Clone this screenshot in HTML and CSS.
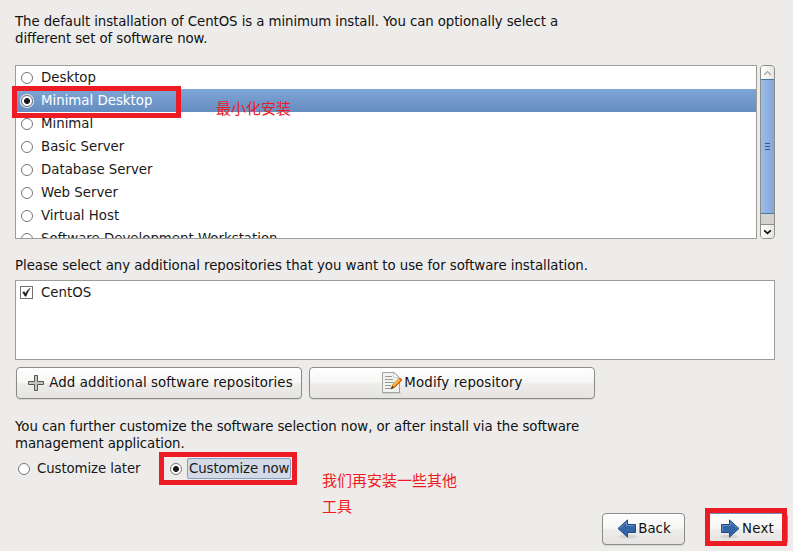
FILE: index.html
```html
<!DOCTYPE html>
<html lang="en">
<head>
<meta charset="utf-8">
<title>Software selection</title>
<link rel="stylesheet" href="styles.css">
</head>
<body>
<main class="page">
  <p class="intro">The default installation of CentOS is a minimum install. You can optionally select a<br>different set of software now.</p>

  <div class="chooser">
    <div class="list">
      <div class="row"><span class="radio"></span>Desktop</div>
      <div class="row selected"><span class="radio on"></span>Minimal Desktop</div>
      <div class="row"><span class="radio"></span>Minimal</div>
      <div class="row"><span class="radio"></span>Basic Server</div>
      <div class="row"><span class="radio"></span>Database Server</div>
      <div class="row"><span class="radio"></span>Web Server</div>
      <div class="row"><span class="radio"></span>Virtual Host</div>
      <div class="row"><span class="radio"></span>Software Development Workstation</div>
    </div>
    <div class="scrollbar">
      <div class="step up"><svg width="9" height="6" viewBox="0 0 9 6"><path d="M1.200 4.700 4.500 1.600 7.800 4.700" fill="none" stroke="#aaa" stroke-width="1.400"/></svg></div>
      <div class="thumb"><i></i><i></i><i></i></div>
      <div class="step down"><svg width="9" height="6" viewBox="0 0 9 6"><path d="M1.200 1.300 4.500 4.400 7.800 1.300" fill="none" stroke="#111" stroke-width="1.700"/></svg></div>
    </div>
  </div>

  <p class="repo-label">Please select any additional repositories that you want to use for software installation.</p>
  <div class="repos">
    <div class="row"><span class="check"><svg width="11" height="11" viewBox="0 0 11 11"><path d="M1.600 5.300 3.300 4.600 4.500 6.700C5.700 4 7 2.400 9.300 1.200 7.500 3.600 6.300 6 5.200 9.200H4Z" fill="#1c1c1c" stroke="#1c1c1c" stroke-width=".4"/></svg></span>CentOS</div>
  </div>
  <div class="repo-buttons">
    <button class="btn add"><svg width="16" height="16" viewBox="0 0 16 16"><path d="M6.500.5h3v6h6v3h-6v6h-3v-6h-6v-3h6z" fill="#c4c5c2" stroke="#555753"/></svg>Add additional software repositories</button>
    <button class="btn modify"><svg width="22" height="22" viewBox="0 0 22 22">
      <path d="M1 21.200h19" stroke="#000" stroke-opacity=".15"/>
      <path d="M1.500.5h11.700l5.300 5v15h-17z" fill="#f2f2f0" stroke="#a2a4a0"/>
      <path d="M12.500 1c1 2-.2 3.700.4 4.700 1.800-.3 3.800 0 5.200.8L13.500 1z" fill="#fff" stroke="#b5b7b3" stroke-width=".7"/>
      <path d="M4 4.500h7M4 7.500h8M4 10.500h9M4 13.500h6M4 16.500h6" stroke="#999b97"/>
      <path d="M10 16.800 11.800 12.800 18.200 6.500Q19.400 5.800 20.300 7.100 20.900 8.100 20.200 8.900L13.800 15.200Z" fill="#f57900" stroke="#a94700" stroke-width=".8"/>
      <path d="m12.400 13.600 6.300-6.200" stroke="#fcc84a" stroke-width="1.500"/>
      <path d="m10 16.900 1.200-2.500 1.400 1.300z" fill="#222"/>
    </svg>Modify repository</button>
  </div>

  <p class="custom-label">You can further customize the software selection now, or after install via the software<br>management application.</p>
  <div class="options">
    <div class="option"><span class="radio"></span><span class="option-text">Customize later</span></div>
    <div class="option"><span class="radio on"></span><span class="option-text focus">Customize now</span></div>
  </div>

  <div class="nav">
    <button class="btn back"><svg width="20" height="20" viewBox="0 0 20 20"><ellipse cx="11" cy="17.500" rx="9" ry="2" fill="#000" opacity=".09"/><path d="M1 9.500 10.500.9v4.600h8v8h-8v4.600z" fill="#3465a4" stroke="#204a87"/><path d="M2.600 9.400 9.500 3.200v3.300h8" fill="none" stroke="#6f98c9" stroke-width=".8"/></svg>Back</button>
    <button class="btn next"><svg width="20" height="20" viewBox="0 0 20 20"><ellipse cx="9" cy="17.500" rx="9" ry="2" fill="#000" opacity=".09"/><path d="M19 9.500 9.500.9v4.600h-8v8h8v4.600z" fill="#3465a4" stroke="#204a87"/><path d="M17.400 9.400 10.500 3.200v3.300h-8v6" fill="none" stroke="#6f98c9" stroke-width=".8"/></svg>Next</button>
  </div>

  <div class="mark mark-desktop"></div>
  <div class="mark mark-custom"></div>
  <div class="mark mark-next"></div>
  <div class="note note-minimal">最小化安装</div>
  <div class="note note-tools">我们再安装一些其他<br>工具</div>
</main>
</body>
</html>
```
FILE: styles.css
```css
* { box-sizing: border-box; }
body { margin: 0; background: #edeceb; }
.page {
  position: relative;
  width: 793px;
  height: 551px;
  padding: 13px 18px 0 15px;
  overflow: hidden;
  font: 13.33px/17px "DejaVu Sans", sans-serif;
  color: #1a1a1a;
  white-space: nowrap;
}
p { margin: 0; color: #111; }
.intro { letter-spacing: -0.08px; }
.chooser { display: flex; gap: 3px; height: 174px; margin-top: 18px; }
.list, .repos { border: 1px solid #9c9c98; background: #fff; overflow: hidden; }
.list { width: 742px; }
.row { display: flex; align-items: center; height: 23px; padding-left: 5px; gap: 8px; }
.selected { background: linear-gradient(#7fa5d6, #668dc0); color: #fff; }
.radio {
  flex: none;
  width: 12px;
  height: 12px;
  border: 1px solid #767676;
  border-radius: 50%;
  background: #fff;
}
.selected .radio { box-shadow: 0 0 0 1px #e8eef5; }
.radio.on { background: radial-gradient(circle at center, #1a1a1a 0 2.600px, #fff 3.300px); }
.scrollbar {
  display: flex;
  flex-direction: column;
  width: 15px;
  border: 1px solid #8d8d89;
  border-radius: 4px;
  background: #d3d2d0;
  overflow: hidden;
}
.step { display: flex; align-items: center; justify-content: center; height: 13px; background: linear-gradient(90deg, #fff, #e6e5e3); }
.down { height: 14px; margin-top: auto; border-top: 1px solid #8d8d89; }
.thumb {
  display: flex;
  flex-direction: column;
  align-items: center;
  justify-content: center;
  gap: 2px;
  height: 135px;
  margin: 0 -1px;
  border: 1px solid #4c76aa;
  background: linear-gradient(90deg, #9bbce5, #83a8d8);
}
.thumb i { width: 5px; height: 1px; background: #34598c; }
.repo-label { margin-top: 18px; letter-spacing: -0.05px; }
.repos { height: 80px; margin-top: 6px; }
.repos .row { padding-left: 4px; }
.check { width: 13px; height: 13px; border: 1px solid #6f6f6f; background: #fff; }
.check svg { display: block; }
.repo-buttons { display: flex; gap: 7px; margin: 7px 0 0 1px; }
.btn {
  display: flex;
  align-items: center;
  justify-content: center;
  height: 32px;
  padding: 0 0 2px;
  border: 1px solid #8b8b88;
  border-radius: 4px;
  background: linear-gradient(#fff, #f6f6f5 48%, #eeedec 52%, #e5e4e2);
  box-shadow: 0 1px 1px #d5d4d2;
  color: #111;
  font: inherit;
}
.btn svg { flex: none; position: relative; top: 1px; }
.add { width: 286px; gap: 5px; padding-left: 3px; letter-spacing: 0.085px; }
.modify { width: 286px; gap: 1px; letter-spacing: 0.15px; }
.custom-label { margin-top: 19px; letter-spacing: -0.075px; }
.options { display: flex; margin-top: 5px; height: 23px; padding-left: 3px; letter-spacing: -0.1px; }
.option { display: flex; align-items: center; gap: 5px; width: 152px; }
.option-text { height: 21px; padding: 1px 1px; border: 1px solid transparent; border-radius: 2px; }
.focus { border-color: #829fc5; background: #d3dae6; }
.nav { display: flex; gap: 20px; margin: 33px 0 0 587px; }
.back, .next { width: 83px; gap: 1px; flex: none; }
.back { padding-left: 1px; }
.next { gap: 2px; padding-left: 1px; border-color: #7191bb; letter-spacing: 0.2px; }
.mark { position: absolute; border: 5px solid #ed1c24; }
.mark-desktop { left: 12px; top: 86px; width: 169px; height: 32px; }
.mark-custom { left: 159px; top: 452px; width: 138px; height: 33px; }
.mark-next { left: 705px; top: 508px; width: 82px; height: 38px; }
.note { position: absolute; color: #ed1c24; font: 15px/26px "Noto Sans CJK SC", sans-serif; }
.note-minimal { left: 216px; top: 95px; }
.note-tools { left: 322px; top: 467px; }
```
